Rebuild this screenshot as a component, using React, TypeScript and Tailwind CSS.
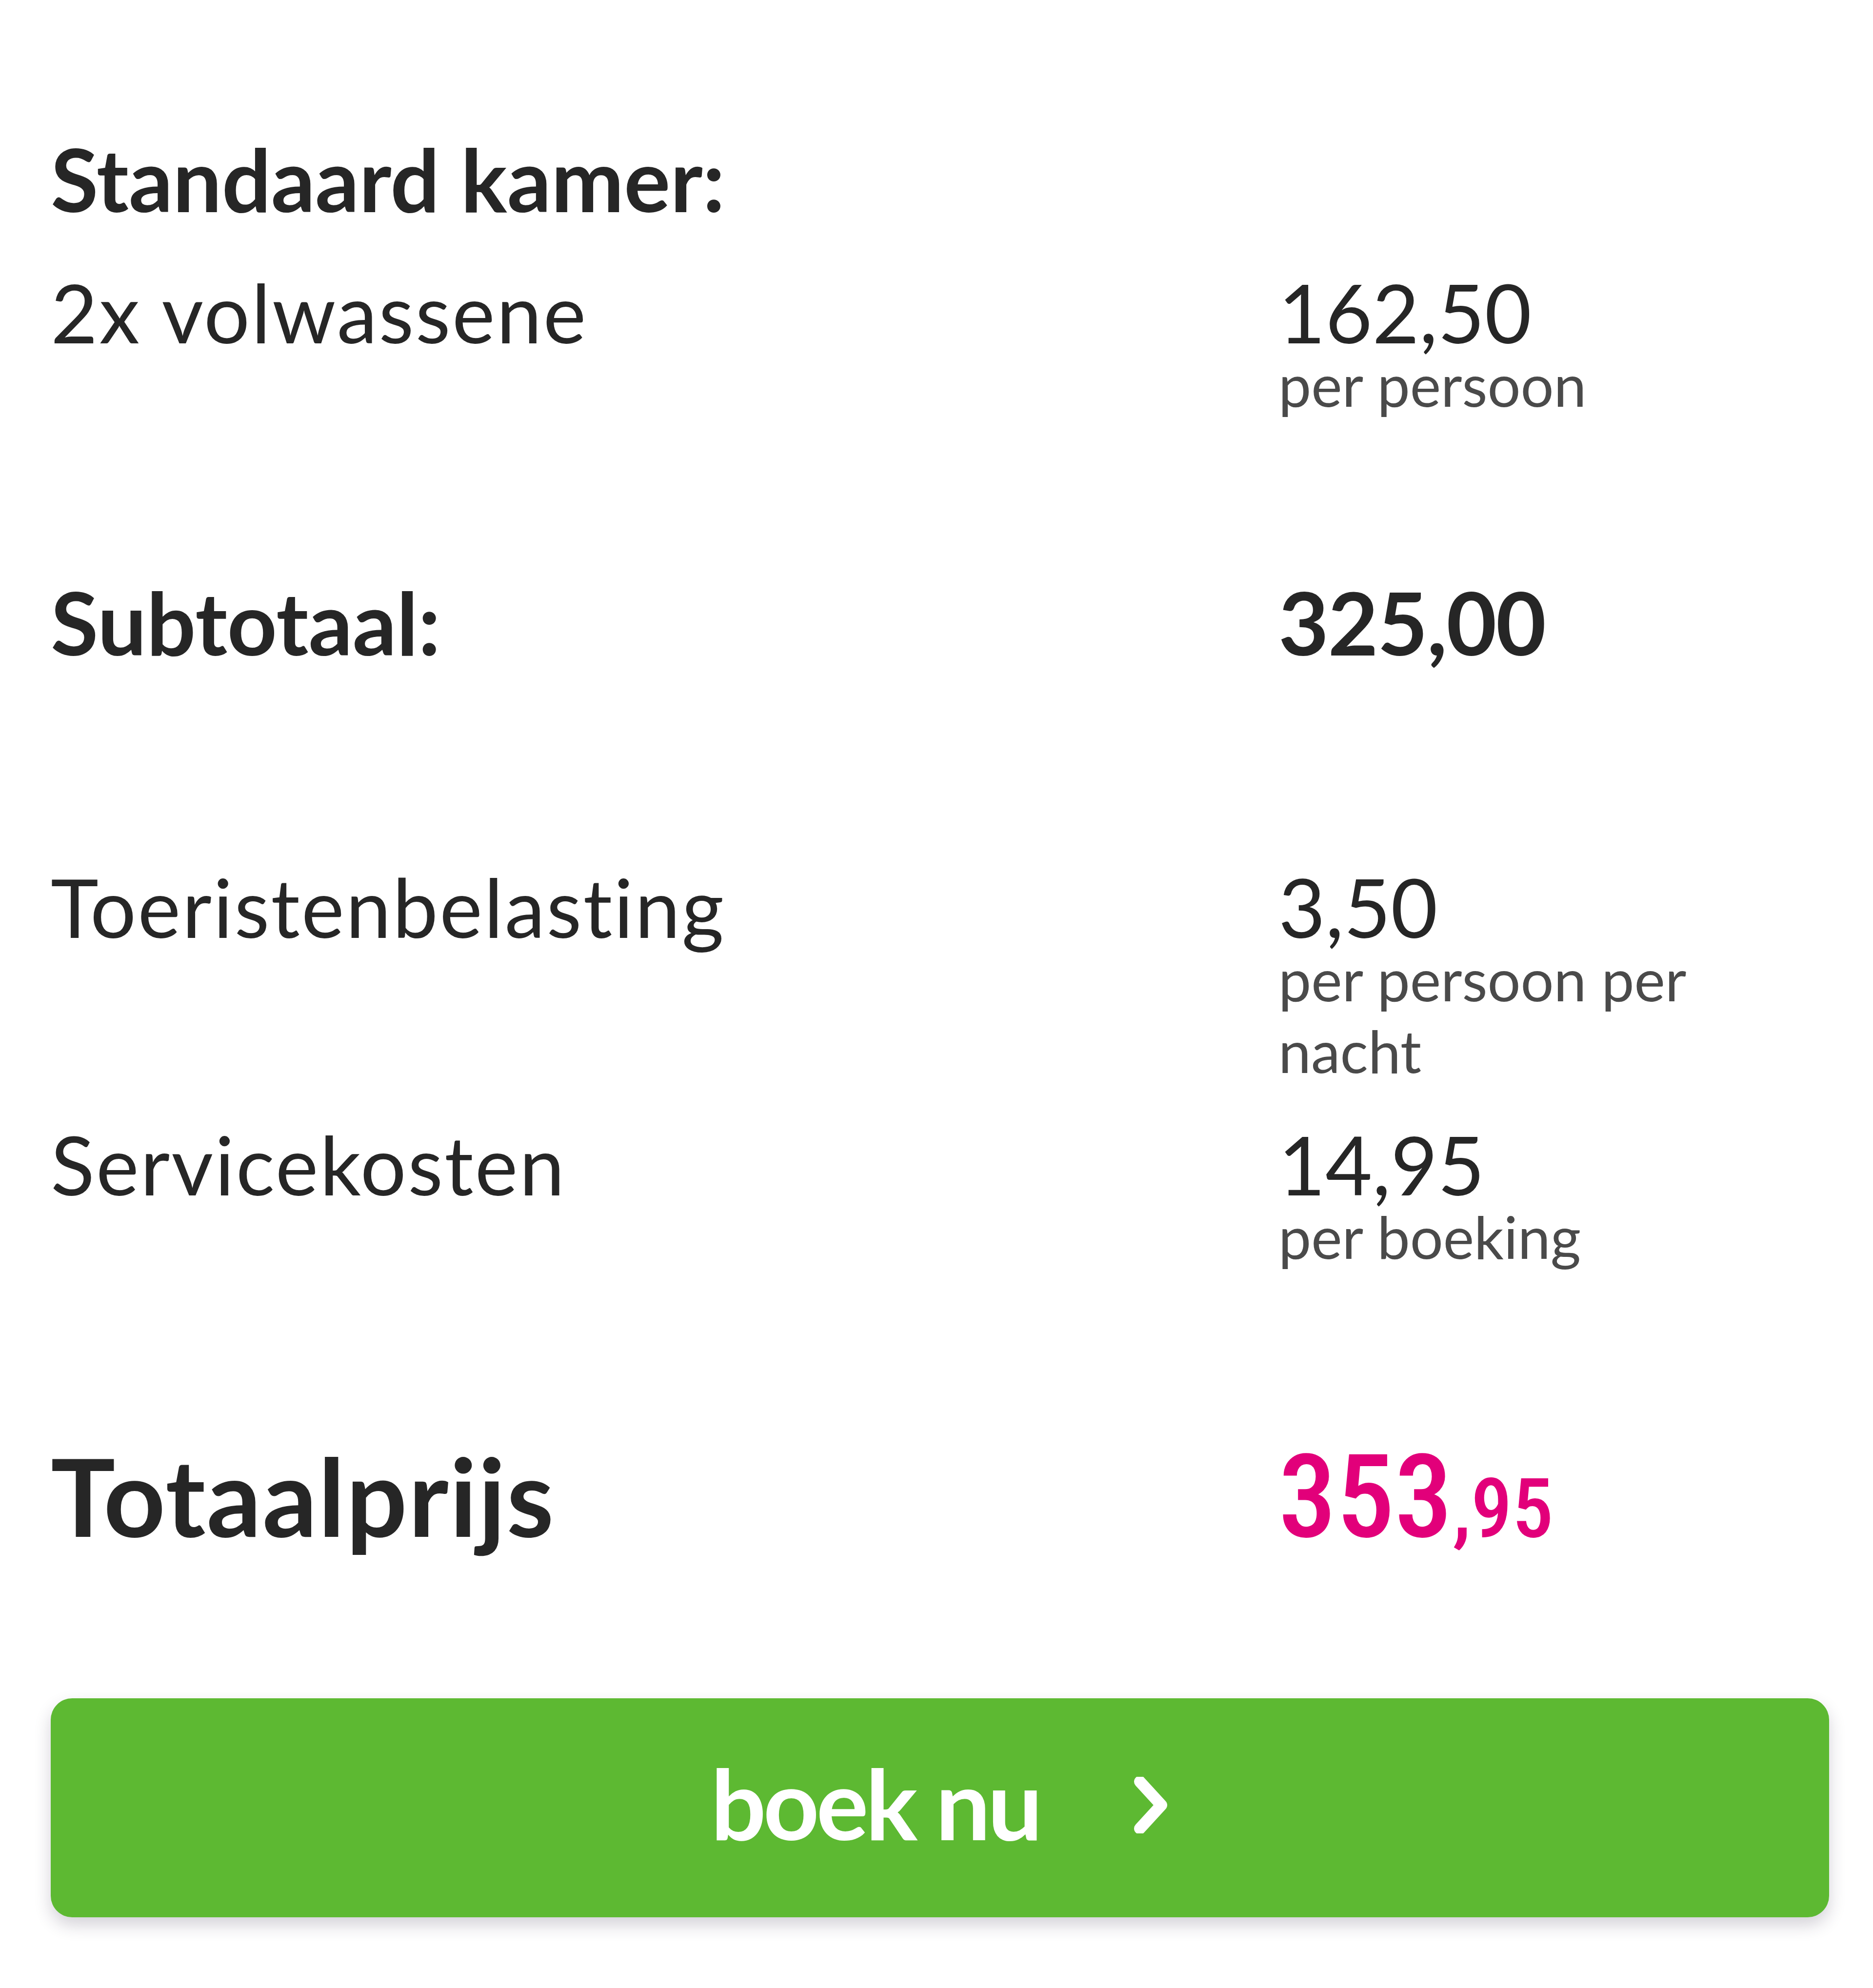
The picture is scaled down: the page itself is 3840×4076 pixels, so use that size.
import React from "react";

function Row({
  label,
  value,
  sub,
  bold = false,
  className = "",
}: {
  label: string;
  value: string;
  sub?: string;
  bold?: boolean;
  className?: string;
}) {
  const size = bold ? "text-[178px] font-bold" : "text-[166px] font-normal tracking-[0.02em]";
  const valueSize = bold ? "text-[178px] font-bold tracking-[-0.01em]" : "text-[166px] font-normal";
  return (
    <div className={`grid grid-cols-[2517px_1fr] items-start ${className}`}>
      <div className={`${size} leading-[150px] whitespace-nowrap`}>{label}</div>
      <div className="flex flex-col">
        <div className={`${valueSize} leading-[150px] whitespace-nowrap`}>{value}</div>
        {sub && (
          <div className="max-w-[1000px] text-[120px] leading-[147px] text-[#4a4a4a]">{sub}</div>
        )}
      </div>
    </div>
  );
}

export default function App() {
  return (
    <div className="w-[3840px] min-h-[4076px] bg-white font-[Lato,sans-serif] text-[#262626] pl-[104px] pr-[90px] pt-[259px] pb-[147px]">
      <div className="text-[178px] font-bold leading-[214px] whitespace-nowrap">Standaard kamer:</div>

      <Row className="mt-[92px]" label="2x volwassene" value="162,50" sub="per persoon" />

      <Row className="mt-[338px]" label="Subtotaal:" value="325,00" bold />

      <Row className="mt-[434px]" label="Toeristenbelasting" value="3,50" sub="per persoon per nacht" />

      <Row className="mt-[84px]" label="Servicekosten" value="14,95" sub="per boeking" />

      <div className="mt-[342px] grid grid-cols-[2517px_1fr] items-baseline">
        <div className="text-[221px] font-bold leading-[221px] tracking-[0.01em]">Totaalprijs</div>
        <div className="font-[Roboto,sans-serif] [font-stretch:75%] font-medium text-[#e2007a] leading-none whitespace-nowrap">
          <span className="text-[238px]">353</span>
          <span className="text-[169px]">,95</span>
        </div>
      </div>

      <button
        type="button"
        className="mt-[293px] w-[3646px] h-[449px] rounded-[44px] bg-[#5db932] shadow-[0_16px_34px_rgba(40,30,60,0.2)] flex items-center justify-center pb-[22px] text-white"
      >
        <span className="text-[200px] font-bold leading-none tracking-[-0.03em]">boek nu</span>
        <svg className="ml-[191px] mt-[10px]" width="74" height="116" viewBox="0 0 74 116" fill="none">
          <polyline
            points="14,10 58,58 14,106"
            stroke="white"
            strokeWidth="24"
            strokeLinecap="round"
            strokeLinejoin="round"
          />
        </svg>
      </button>
    </div>
  );
}
